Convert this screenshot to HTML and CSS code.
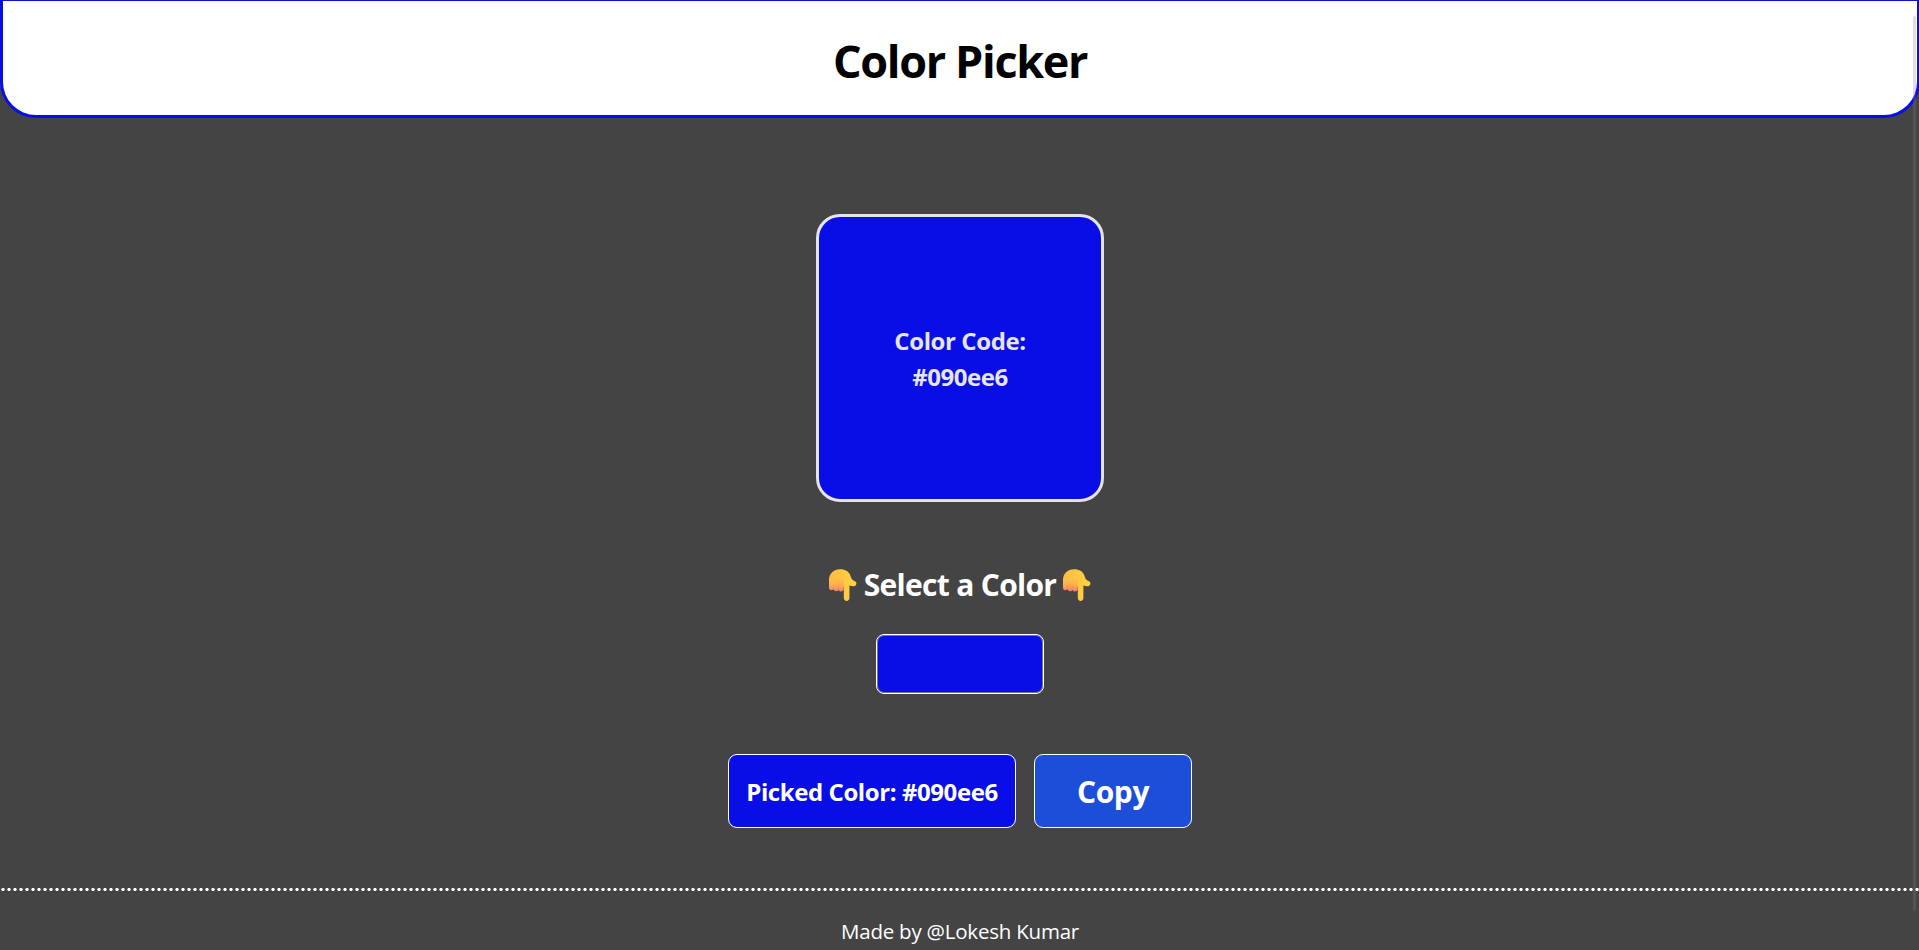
FILE: index.html
```html
<!DOCTYPE html>
<html lang="en">
<head>
<meta charset="utf-8">
<title>Color Picker</title>
<link rel="stylesheet" href="styles.css">
</head>
<body>
<svg class="defs" aria-hidden="true">
  <defs>
    <linearGradient id="skin" x1="0" y1="0" x2="1" y2="0"><stop offset="0" stop-color="#ffb944"/><stop offset=".5" stop-color="#ffc843"/><stop offset="1" stop-color="#ffd23c"/></linearGradient>
    <linearGradient id="fingers" gradientUnits="userSpaceOnUse" x1="0" y1="9" x2="0" y2="22"><stop offset="0" stop-color="#ffc044"/><stop offset=".55" stop-color="#ffae50"/><stop offset="1" stop-color="#f47e74"/></linearGradient>
    <symbol id="hand" viewBox="0 0 28 32">
      <path fill="url(#skin)" d="M0 13V11C0 4.5 4.8 .3 11 .3C16.6 .3 20.3 2.8 21.6 7.2Q22.3 10.3 24.4 11.4L26.4 12.4Q28 13.5 27.2 15.4Q26.2 17.7 23.6 17.2L20.4 16.4V29Q20.2 31.8 17.6 31.9Q15 31.8 14.8 29V19L12 13Z"/>
      <path fill="url(#fingers)" d="M0 10V19.2Q.4 21.3 2.3 21.3Q3.6 21.4 4.4 20.3Q5.2 22.2 7 22.2Q8.8 22.2 9.5 20.9Q10.4 22.8 12.2 22.6Q14.8 22.4 14.8 20V10Z"/>
      <path fill="none" stroke="#ec7f52" stroke-opacity=".65" stroke-width=".6" d="M4.4 16V20.5M9.5 16.5V21M14.8 17V21"/>
    </symbol>
  </defs>
</svg>
<header class="header"><h1 class="title">Color Picker</h1></header>
<main class="main">
  <section class="preview">
    <span>Color Code:</span>
    <span class="preview-code">#090ee6</span>
  </section>
  <h2 class="prompt"><svg class="hand"><use href="#hand"/></svg><span class="prompt-text">Select a Color</span><svg class="hand"><use href="#hand"/></svg></h2>
  <div class="swatch"></div>
  <div class="actions">
    <div class="picked"><span>Picked Color: #090ee6</span></div>
    <button class="copy"><span>Copy</span></button>
  </div>
</main>
<footer class="footer"><span>Made by @Lokesh Kumar</span></footer>
<div class="scrollbar"></div>
</body>
</html>
```
FILE: styles.css
```css
* { box-sizing: border-box; }
html { overflow: hidden; background: #444; }
body {
  margin: 0;
  width: 1920px;
  height: 950px;
  overflow: hidden;
  display: flex;
  flex-direction: column;
  background: #444;
  color: #fff;
  font-family: "Open Sans", "Noto Sans", sans-serif;
}
.defs { position: absolute; width: 0; height: 0; }
.header {
  flex: none;
  height: 118px;
  display: flex;
  align-items: center;
  justify-content: center;
  padding-top: 5px;
  background: #fff;
  border: 3px solid #090ee6;
  border-top-width: 1px;
  border-radius: 0 0 36px 36px;
}
.title { margin: 0; color: #000; font-size: 45px; line-height: 60px; font-weight: 700; letter-spacing: -1.35px; white-space: nowrap; }
.main { flex: none; height: 770px; padding-top: 96px; display: flex; flex-direction: column; align-items: center; }
.preview {
  width: 288px;
  height: 288px;
  padding-top: 2px;
  display: flex;
  flex-direction: column;
  align-items: center;
  justify-content: center;
  background: #090ee6;
  border: 3px solid #e5e5e5;
  border-radius: 24px;
  color: #e5e5e5;
  font-size: 24px;
  line-height: 36px;
  font-weight: 700;
  letter-spacing: -0.4px;
}
.preview-code { letter-spacing: -0.5px; }
.prompt { margin: 62px 0 0; height: 42px; display: flex; align-items: center; justify-content: center; gap: 6px; font-size: 30px; line-height: 42px; }
.prompt-text { width: 194px; text-align: center; white-space: nowrap; letter-spacing: -0.7px; }
.hand { width: 28px; height: 32px; flex: none; }
.swatch { width: 168px; height: 60px; margin-top: 28px; background: #090ee6; border: 1px solid #fff; border-radius: 8px; box-shadow: inset 0 0 0 1px #777; }
.actions { display: flex; gap: 18px; margin-top: 60px; }
.picked, .copy {
  height: 74px;
  display: flex;
  align-items: center;
  justify-content: center;
  border: 1px solid #fff;
  border-radius: 9px;
  color: #fff;
  font-family: inherit;
  font-weight: 700;
  white-space: nowrap;
}
.picked { width: 288px; background: #090ee6; font-size: 24px; letter-spacing: -0.42px; }
.copy { width: 158px; padding: 0; background: #1d4ed8; font-size: 30px; letter-spacing: -0.4px; }
.footer {
  flex: none;
  height: 62px;
  padding-top: 28px;
  background: radial-gradient(circle at 3px 1.5px, #fff 1.3px, transparent 2px) 0 0 / 6px 3px repeat-x;
  text-align: center;
  font-size: 20.5px;
  letter-spacing: -0.22px;
  line-height: 30px;
  white-space: nowrap;
}
.scrollbar { position: absolute; left: 1913px; top: 16px; width: 3px; height: 895px; border-radius: 2px; background: rgba(128,128,128,.25); }
```
